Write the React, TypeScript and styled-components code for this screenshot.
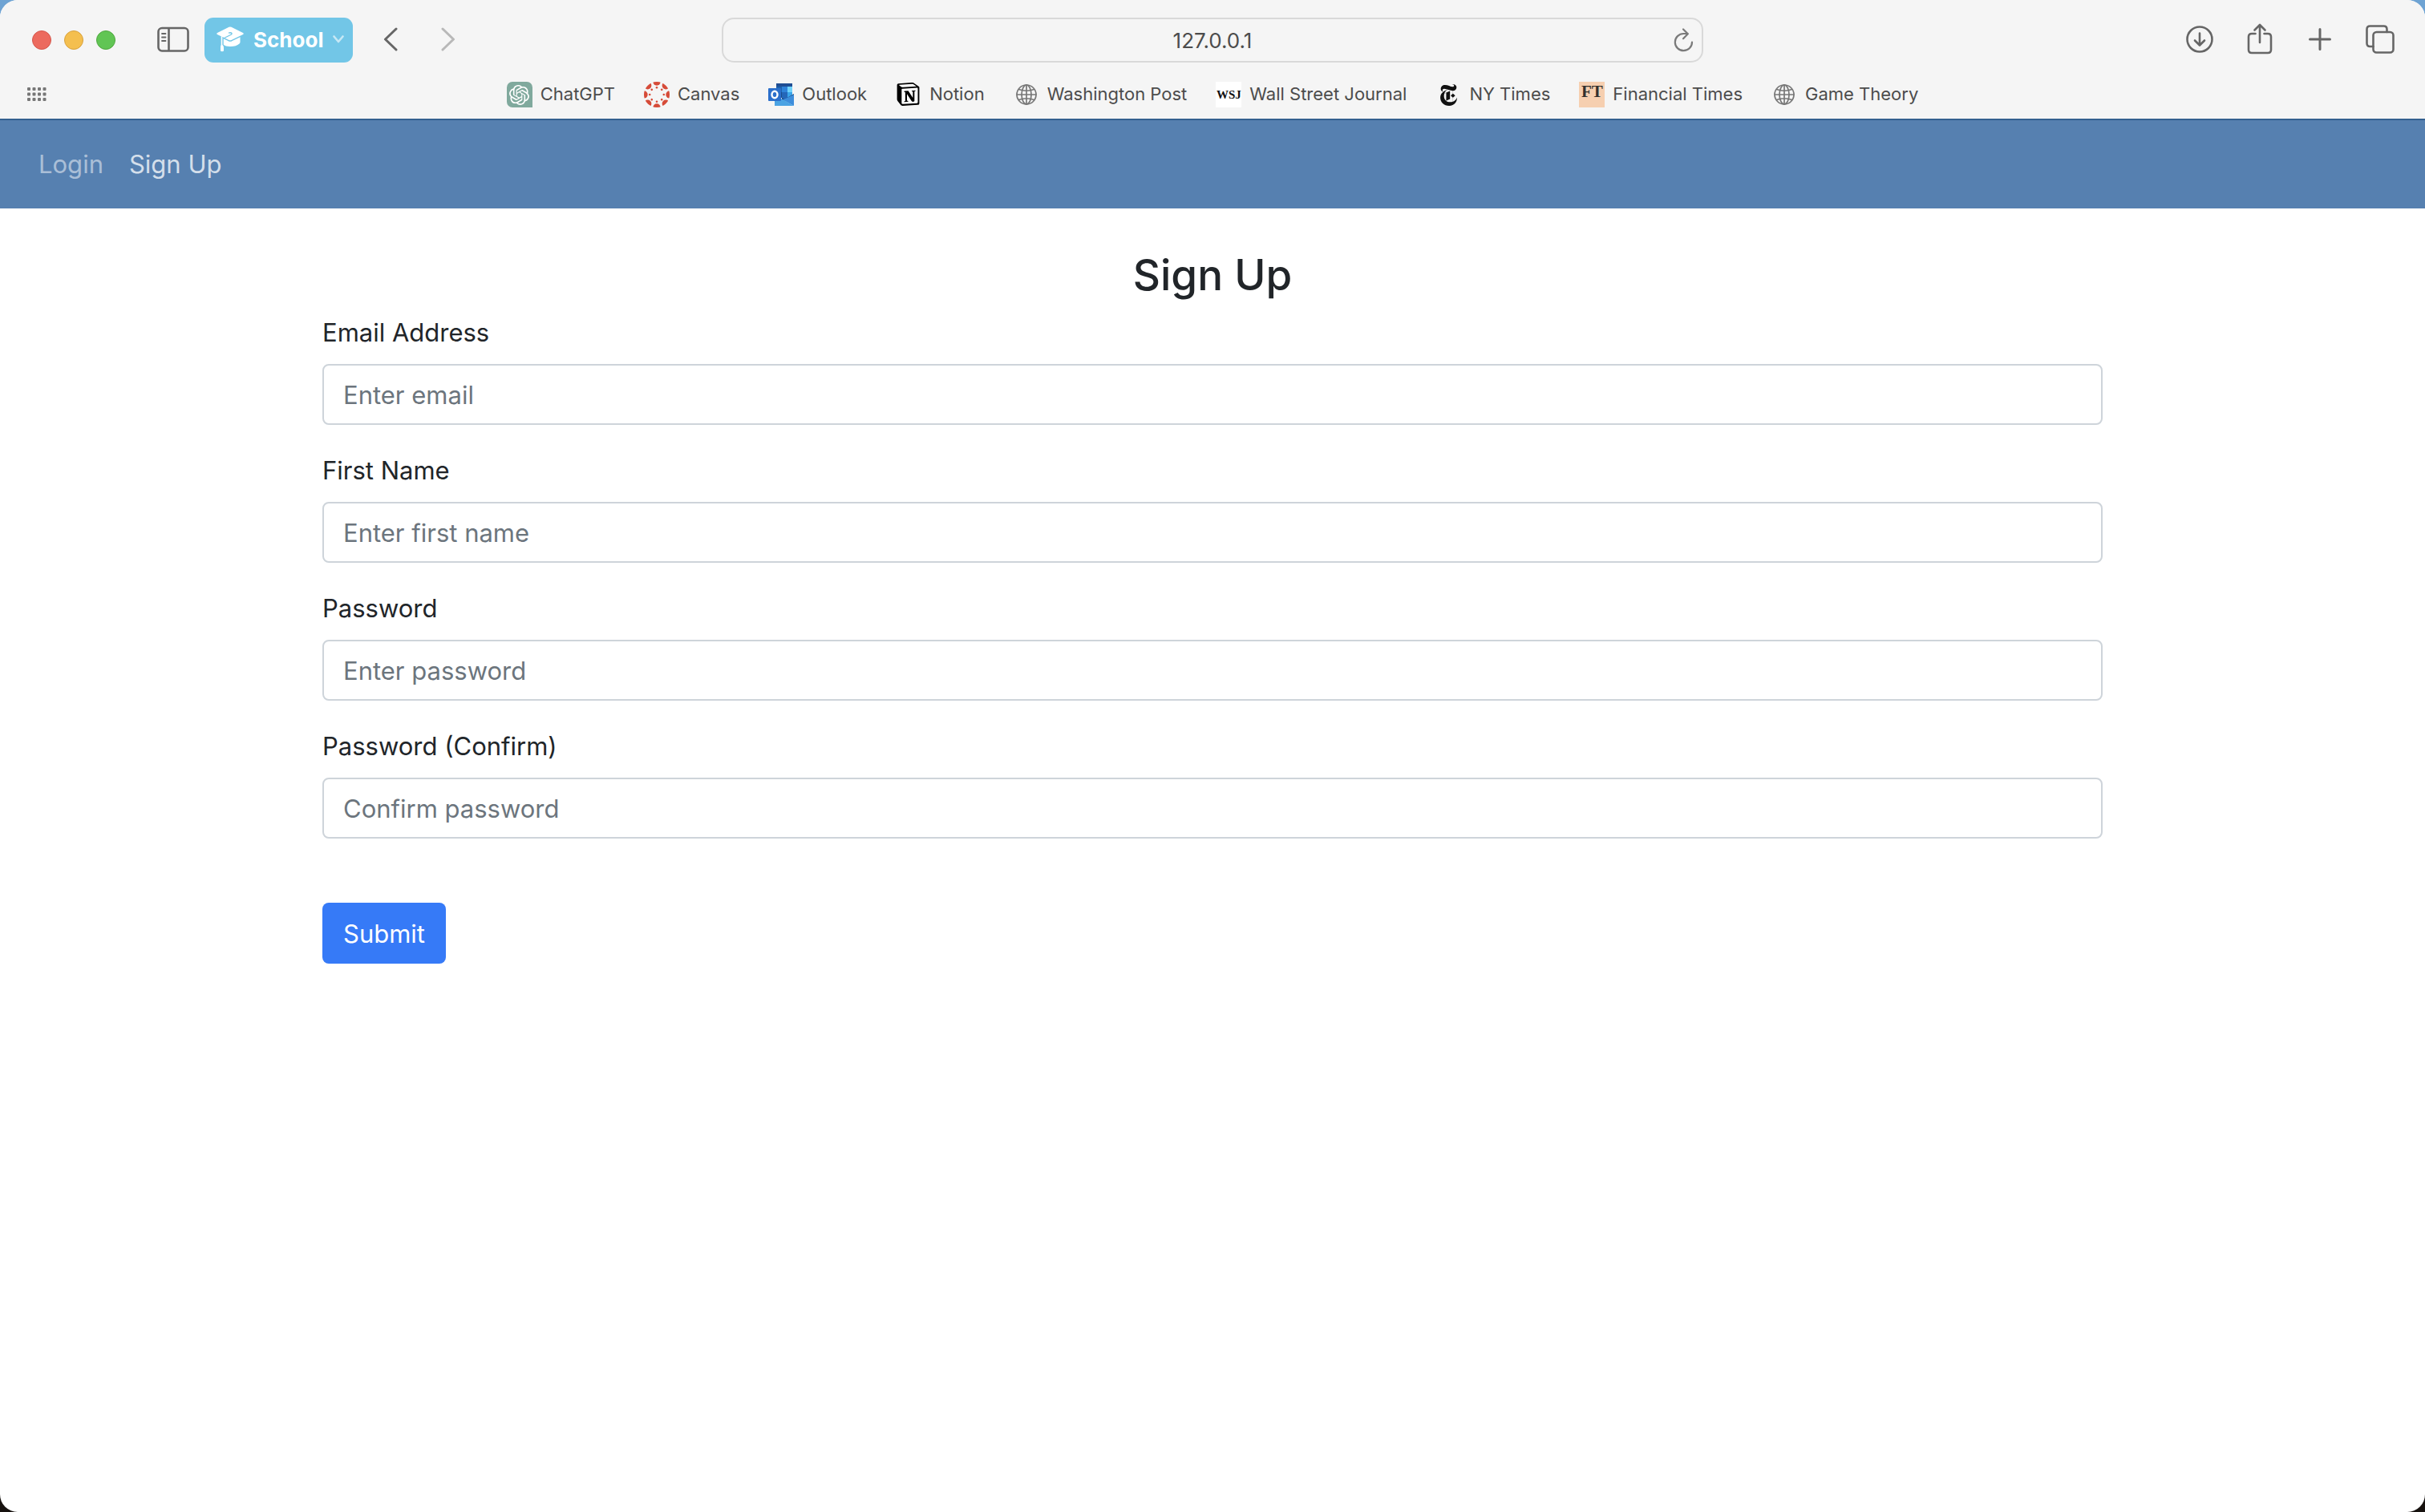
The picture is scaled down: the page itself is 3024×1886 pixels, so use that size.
import React from "react";
import styled, { createGlobalStyle } from "styled-components";
import { SiNewyorktimes, SiNotion, SiOpenai } from "react-icons/si";

const GlobalStyle = createGlobalStyle`
  * { box-sizing: border-box; }
  html, body { margin: 0; }
  body {
    font-family: Inter, "Liberation Sans", sans-serif;
    background: linear-gradient(#6ea3d3 0, #6ea3d3 50%, #17120f 50%, #17120f 100%);
  }
  button, input { font: inherit; }
`;

const Window = styled.div`
  min-height: 100vh;
  display: flex;
  flex-direction: column;
  background: #fff;
  border-radius: 22px;
  overflow: hidden;
`;

const Chrome = styled.header`
  background: #f5f5f5;
  color: #4c4c4c;
  height: 148px;
  display: flex;
  flex-direction: column;
`;

const Toolbar = styled.div`
  display: grid;
  grid-template-columns: 1fr minmax(0, 1224px) 1fr;
  align-items: center;
  height: 100px;
`;

const ToolGroup = styled.div<{ $end?: boolean }>`
  display: flex;
  align-items: center;
  justify-content: ${(p) => (p.$end ? "flex-end" : "flex-start")};
  gap: ${(p) => (p.$end ? "35px" : "0")};
  padding: ${(p) => (p.$end ? "0 36px 0 0" : "0 0 0 40px")};
`;

const Lights = styled.div`
  display: flex;
  gap: 16px;
  margin-right: 52px;
`;

const Light = styled.button<{ $fill: string; $ring: string }>`
  width: 24px;
  height: 24px;
  padding: 0;
  border-radius: 50%;
  border: 1px solid ${(p) => p.$ring};
  background: ${(p) => p.$fill};
`;

const IconButton = styled.button<{ $faint?: boolean }>`
  display: flex;
  align-items: center;
  justify-content: center;
  width: 40px;
  height: 56px;
  padding: 0 0 2px;
  border: 0;
  background: none;
  color: ${(p) => (p.$faint ? "#b8b8b8" : "#666")};
`;

const ProfileButton = styled.button`
  display: flex;
  align-items: center;
  gap: 12px;
  height: 56px;
  padding: 0 11px 2px 15px;
  margin: 0 27px 0 19px;
  border: 0;
  border-radius: 11px;
  background: #72c6e7;
  color: #fff;
  font-size: 26px;
  font-weight: 700;
`;

const NavButtons = styled.div`
  display: flex;
  gap: 32px;
`;

const AddressBar = styled.div`
  display: flex;
  align-items: center;
  height: 56px;
  padding: 0 8px;
  border: 2px solid #d9d9d9;
  border-radius: 15px;
`;

const Address = styled.input`
  flex: 1;
  min-width: 0;
  padding: 0 0 0 28px;
  border: 0;
  outline: 0;
  background: none;
  color: #4c4c4c;
  font-size: 26px;
  text-align: center;
`;

const Reload = styled.button`
  display: flex;
  width: 28px;
  padding: 0;
  border: 0;
  background: none;
  color: #7a7a7a;
`;

const Favorites = styled.nav`
  display: grid;
  grid-template-columns: 60px 1fr 60px;
  align-items: center;
  height: 36px;
`;

const GridButton = styled.button`
  display: flex;
  padding: 0 0 0 34px;
  border: 0;
  background: none;
  color: #777;
`;

const FavoriteList = styled.div`
  display: flex;
  justify-content: center;
  gap: 36px;
`;

const Favorite = styled.a`
  display: flex;
  align-items: center;
  gap: 10px;
  color: #4c4c4c;
  font-size: 22px;
  line-height: 30px;
  text-decoration: none;
  white-space: nowrap;
`;

const FavoriteName = styled.span`
  padding-bottom: 2px;
`;

const Tile = styled.span<{ $bg?: string; $fg?: string; $round?: boolean }>`
  display: flex;
  align-items: center;
  justify-content: center;
  width: 32px;
  height: 32px;
  color: ${(p) => p.$fg ?? "#777"};
  background: ${(p) => p.$bg ?? "none"};
  border-radius: ${(p) => (p.$round ? "7px 7px 0 7px" : "0")};
`;

const SiteNav = styled.nav`
  display: flex;
  padding: 16px 32px;
  background: #5680b0;
  box-shadow: inset 0 2px 0 #33608f;
`;

const SiteLink = styled.a<{ $active?: boolean }>`
  padding: 17px 16px 15px;
  font-size: 31px;
  line-height: 48px;
  text-decoration: none;
  color: rgba(255, 255, 255, ${(p) => (p.$active ? 0.75 : 0.5)});
`;

const Container = styled.main`
  width: 100%;
  max-width: 2280px;
  margin: 0 auto;
  padding: 48px 30px;
  color: #212529;
`;

const Title = styled.h1`
  margin: 0 0 12px;
  font-size: 53px;
  font-weight: 500;
  line-height: 70px;
  text-align: center;
`;

const Form = styled.form`
  display: flex;
  flex-direction: column;
  align-items: flex-start;
  gap: 32px;
  font-size: 31px;
  line-height: 50px;
`;

const Field = styled.div`
  display: flex;
  flex-direction: column;
  gap: 14px;
  width: 100%;
`;

const TextInput = styled.input`
  width: 100%;
  height: 76px;
  padding: 12px 24px;
  border: 2px solid #ced4da;
  border-radius: 8px;
  background: #fff;
  color: #495057;
  font-size: 31px;
  &::placeholder { color: #6c757d; opacity: 1; }
`;

const Submit = styled.button`
  height: 76px;
  margin-top: 48px;
  padding: 2px 26px 0;
  border: 0;
  border-radius: 8px;
  background: #367af7;
  color: #fff;
  font-size: 31px;
`;

const line = {
  fill: "none",
  stroke: "currentColor",
  strokeLinecap: "round" as const,
  strokeLinejoin: "round" as const,
};

const SidebarIcon = () => (
  <svg width="40" height="34" viewBox="0 0 40 34" {...line} strokeWidth="2.6">
    <rect x="1.5" y="3" width="37" height="28.5" rx="4.5" />
    <path d="M14.5 3v28.500" strokeLinecap="butt" />
    <path d="M6 10h4.500M6 14.500h4.500M6 19h4.500" strokeWidth="1.8" />
  </svg>
);

const CapIcon = () => (
  <svg width="34" height="32" viewBox="0 0 34 32">
    <path
      d="M6.500 14v6q0 1.500 1.500 2.500 4 2.800 9.500 2.500 7 0 11-3.500 1-.8 1-2V13Z"
      fill="#fff"
    />
    <path
      d="M1 8 15.500.8q1.500-.7 3 0L33 8q1.500 1 0 2l-14.500 7q-1.500.6-3 0L1 10q-1.500-1 0-2Z"
      fill="#fff"
      stroke="#72c6e7"
      strokeWidth="3"
      paintOrder="stroke"
    />
    <path
      d="M15 8.200q3-1 4 .3.500 1-1.500 2L9.500 14.500"
      fill="none"
      stroke="#72c6e7"
      strokeWidth="1.3"
    />
    <path d="M4.300 12v12h4.400V14Z" fill="#72c6e7" />
    <path d="M5.700 12v11q-.7.5-.7 3.500v4q2 1.500 4 0v-4q0-3-1.700-3.500V12.600Z" fill="#fff" />
  </svg>
);

const ShortChevron = () => (
  <svg width="14" height="10" viewBox="0 0 14 10" {...line} strokeWidth="2.6" opacity="0.6">
    <path d="m1.500 1.500 5.500 6.500 5.500-6.500" />
  </svg>
);

const Chevron = ({ flip }: { flip?: boolean }) => (
  <svg width="18" height="30" viewBox="0 0 18 30" {...line} strokeWidth="3">
    <path d={flip ? "m2 2 13.500 13L2 28" : "M16 2 2.500 15 16 28"} />
  </svg>
);

const ReloadIcon = () => (
  <svg width="28" height="32" viewBox="0 0 28 32" {...line} strokeWidth="2.2">
    <path d="M24 18.500A10.600 10.600 0 1 1 13.400 8h5" />
    <path d="m13 2.500 5.800 5.700-5.800 6" />
  </svg>
);

const DownloadIcon = () => (
  <svg width="36" height="36" viewBox="0 0 36 36" {...line} strokeWidth="2.6">
    <circle cx="18" cy="18" r="15.5" />
    <path d="M18 10.500v14.500M12 19.500l6 6 6-6" />
  </svg>
);

const ShareIcon = () => (
  <svg width="32" height="40" viewBox="0 0 32 40" {...line} strokeWidth="2.6">
    <path d="M10.500 13H6q-4 0-4 4v16q0 4 4 4h20q4 0 4-4V17q0-4-4-4h-4.500" />
    <path d="M16 24V2.500M9.500 8.500 16 2l6.500 6.500" />
  </svg>
);

const PlusIcon = () => (
  <svg width="28" height="28" viewBox="0 0 28 28" {...line} strokeWidth="3">
    <path d="M14 1.500v25M1.500 14h25" />
  </svg>
);

const TabsIcon = () => (
  <svg width="36" height="36" viewBox="0 0 36 36" {...line} strokeWidth="2.6">
    <path d="M9.500 27H5.500q-4 0-4-4V5.500q0-4 4-4h17q4 0 4 4V9" />
    <rect x="9.5" y="9" width="25" height="25.5" rx="4" />
  </svg>
);

const GridIcon = () => (
  <svg width="24" height="18" viewBox="0 0 24 18" fill="currentColor">
    {[0, 6.5, 13].flatMap((y) =>
      [0, 6.5, 13, 19.5].map((x) => (
        <rect key={`${x}-${y}`} x={x} y={y} width="4" height="4" rx="1" />
      )),
    )}
  </svg>
);

const Globe = () => (
  <svg width="26" height="26" viewBox="0 0 26 26" {...line} strokeWidth="1.7">
    <circle cx="13" cy="13" r="12" />
    <ellipse cx="13" cy="13" rx="6" ry="12" />
    <path d="M13 1v24M1 13h24M3.500 6.500q9.500 3.500 19 0M3.500 19.500q9.500-3.500 19 0" />
  </svg>
);

const CanvasLogo = () => (
  <svg width="32" height="32" viewBox="0 0 32 32" fill="#d64b38">
    <defs>
      <clipPath id="canvas-disc">
        <circle cx="16" cy="16" r="16" />
      </clipPath>
    </defs>
    <g clipPath="url(#canvas-disc)">
      {[0, 45, 90, 135, 180, 225, 270, 315].map((a) => (
        <g key={a} transform={`rotate(${a} 16 16)`}>
          <circle cx="16" cy="0" r="4.7" />
          <circle cx="16" cy="7.2" r="1.3" />
        </g>
      ))}
    </g>
  </svg>
);

const OutlookLogo = () => (
  <svg width="32" height="28" viewBox="0 0 32 28">
    <path fill="#1f4e94" d="M10 0h20v4H10z" />
    <path fill="#1d62ad" d="M10 4h7v7h-7z" />
    <path fill="#2f83d8" d="M17 4h7v7h-7z" />
    <path fill="#70d2fb" d="M24 4h6v7h-6z" />
    <path fill="#1b4d8c" d="M10 11h7v7h-7z" />
    <path fill="#2467b9" d="M17 11h7v9h-7z" />
    <path fill="#3ba5ea" d="M24 11h6v7h-6z" />
    <path fill="#1c3f74" d="m32 13-12 7-3-2v4l15-2Z" />
    <path fill="#3d8ddb" d="M32 14v14L18 20.500Z" />
    <path fill="#4ba3e3" d="M8 14v14h24L18 20Z" />
    <rect fill="#2b6fcb" y="6" width="16" height="16" rx="1" />
    <ellipse cx="8" cy="14" rx="3.5" ry="4.2" fill="none" stroke="#fff" strokeWidth="2.4" />
  </svg>
);

const NotionLogo = () => (
  <svg width="32" height="32" viewBox="0 0 32 32">
    <path
      d="M3 4 21 2.500 27.500 7v20L9 28 3 21Z"
      fill="#fff"
      stroke="#fff"
      strokeWidth="4"
      strokeLinejoin="round"
    />
    <SiNotion x={1} y={1} size={29} color="#000" />
  </svg>
);

const MarkText = styled.span<{ $size: number; $lift?: boolean }>`
  font-family: "Liberation Serif", serif;
  font-weight: 700;
  font-size: ${(p) => p.$size}px;
  line-height: 1;
  padding-bottom: ${(p) => (p.$lift ? "8px" : "0")};
`;

const favorites: { label: string; icon: React.ReactNode }[] = [
  { label: "ChatGPT", icon: <Tile $bg="#80a99d" $fg="#fff" $round><SiOpenai size={25} /></Tile> },
  { label: "Canvas", icon: <Tile><CanvasLogo /></Tile> },
  { label: "Outlook", icon: <Tile><OutlookLogo /></Tile> },
  { label: "Notion", icon: <Tile><NotionLogo /></Tile> },
  { label: "Washington Post", icon: <Tile><Globe /></Tile> },
  { label: "Wall Street Journal", icon: <Tile $bg="#fff" $fg="#111"><MarkText $size={15}>WSJ</MarkText></Tile> },
  { label: "NY Times", icon: <Tile $fg="#111"><SiNewyorktimes size={27} /></Tile> },
  { label: "Financial Times", icon: <Tile $bg="#f6cfb0" $fg="#33302e"><MarkText $size={21} $lift>FT</MarkText></Tile> },
  { label: "Game Theory", icon: <Tile><Globe /></Tile> },
];

const fields = [
  { id: "email", label: "Email Address", type: "email", hint: "Enter email" },
  { id: "firstName", label: "First Name", type: "text", hint: "Enter first name" },
  { id: "password1", label: "Password", type: "password", hint: "Enter password" },
  { id: "password2", label: "Password (Confirm)", type: "password", hint: "Confirm password" },
];

export default function App() {
  return (
    <>
      <GlobalStyle />
      <Window>
        <Chrome>
          <Toolbar>
            <ToolGroup>
              <Lights>
                <Light $fill="#ec6a5e" $ring="#d5564b" aria-label="Close window" />
                <Light $fill="#f4bf4f" $ring="#d8a13c" aria-label="Minimize window" />
                <Light $fill="#61c554" $ring="#4fa73f" aria-label="Zoom window" />
              </Lights>
              <IconButton aria-label="Show sidebar"><SidebarIcon /></IconButton>
              <ProfileButton><CapIcon />School<ShortChevron /></ProfileButton>
              <NavButtons>
                <IconButton aria-label="Back"><Chevron /></IconButton>
                <IconButton aria-label="Forward" $faint><Chevron flip /></IconButton>
              </NavButtons>
            </ToolGroup>
            <AddressBar>
              <Address aria-label="Address" defaultValue="127.0.0.1" />
              <Reload aria-label="Reload page"><ReloadIcon /></Reload>
            </AddressBar>
            <ToolGroup $end>
              <IconButton aria-label="Downloads"><DownloadIcon /></IconButton>
              <IconButton aria-label="Share"><ShareIcon /></IconButton>
              <IconButton aria-label="New tab"><PlusIcon /></IconButton>
              <IconButton aria-label="Tab overview"><TabsIcon /></IconButton>
            </ToolGroup>
          </Toolbar>
          <Favorites aria-label="Favorites">
            <GridButton aria-label="Show favorites"><GridIcon /></GridButton>
            <FavoriteList>
              {favorites.map((f) => (
                <Favorite key={f.label} href="#">
                  {f.icon}
                  <FavoriteName>{f.label}</FavoriteName>
                </Favorite>
              ))}
            </FavoriteList>
          </Favorites>
        </Chrome>
        <SiteNav aria-label="Site">
          <SiteLink href="#login">Login</SiteLink>
          <SiteLink href="#sign-up" $active>Sign Up</SiteLink>
        </SiteNav>
        <Container>
          <Title>Sign Up</Title>
          <Form onSubmit={(e) => e.preventDefault()}>
            {fields.map((f) => (
              <Field key={f.id}>
                <label htmlFor={f.id}>{f.label}</label>
                <TextInput id={f.id} name={f.id} type={f.type} placeholder={f.hint} />
              </Field>
            ))}
            <Submit type="submit">Submit</Submit>
          </Form>
        </Container>
      </Window>
    </>
  );
}
